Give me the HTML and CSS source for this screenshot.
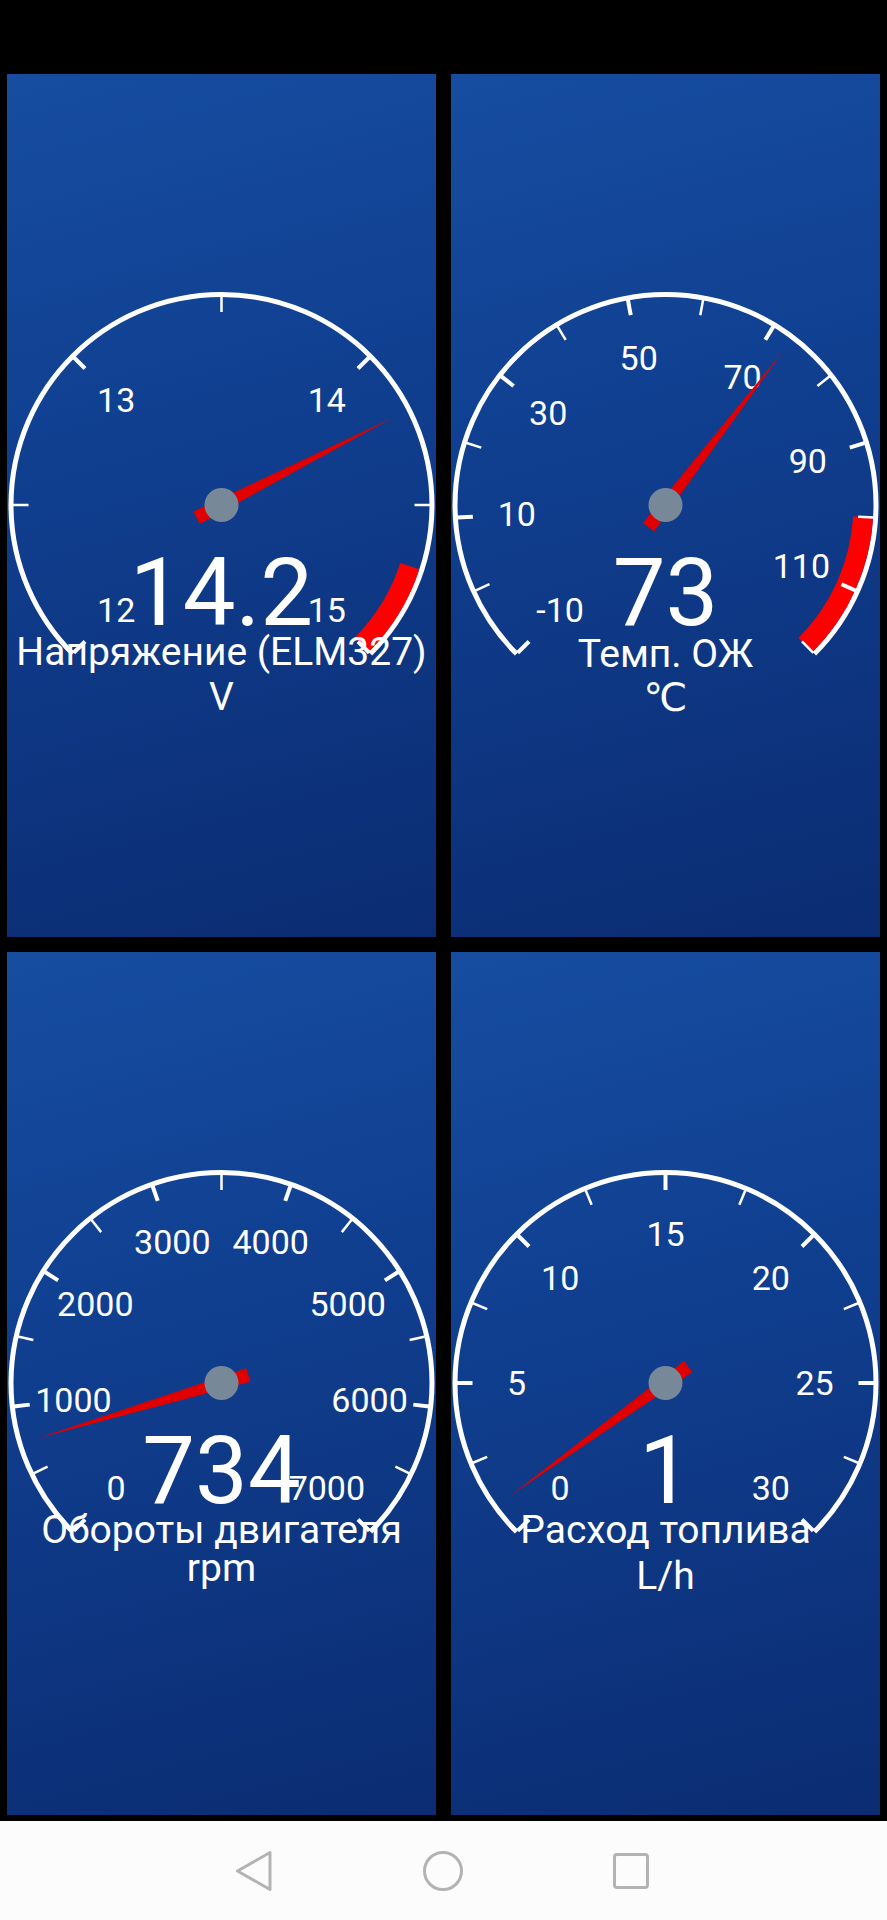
FILE: index.html
```html
<!DOCTYPE html>
<html lang="ru">
<head>
<meta charset="utf-8">
<title>Gauges</title>
<link rel="stylesheet" href="styles.css">
</head>
<body>
<div class="screen">
  <div class="status-bar"></div>
  <main class="grid">
    <!-- Voltage -->
    <section class="panel">
      <svg class="gauge" viewBox="-214.5 -215 429 430" width="429" height="430">
        <circle class="rim" r="210.5" pathLength="360" transform="rotate(135)"/>
        <circle class="zone" r="198" pathLength="360" stroke-dasharray="27 333" transform="rotate(18)"/>
        <line class="tick major" x1="193" x2="209" transform="rotate(-225)"/>
        <line class="tick minor" x1="193" x2="209" transform="rotate(-180)"/>
        <line class="tick major" x1="193" x2="209" transform="rotate(-135)"/>
        <line class="tick minor" x1="193" x2="209" transform="rotate(-90)"/>
        <line class="tick major" x1="193" x2="209" transform="rotate(-45)"/>
        <line class="tick minor" x1="193" x2="209" transform="rotate(0)"/>
        <line class="tick major" x1="193" x2="209" transform="rotate(45)"/>
        <text class="scale" transform="rotate(-225) translate(149) rotate(225)">12</text>
        <text class="scale" transform="rotate(-135) translate(149) rotate(135)">13</text>
        <text class="scale" transform="rotate(-45) translate(149) rotate(45)">14</text>
        <text class="scale" transform="rotate(45) translate(149) rotate(-45)">15</text>
        <polygon class="needle" points="-28,-7 -28,7 192,0" transform="rotate(-27)"/>
        <circle class="pivot" r="17"/>
        <text class="value" y="120">14.2</text>
        <text class="title" y="160">Напряжение (ELM327)</text>
        <text class="unit" y="205">V</text>
      </svg>
    </section>

    <!-- Coolant temperature -->
    <section class="panel">
      <svg class="gauge" viewBox="-214.5 -215 429 430" width="429" height="430">
        <circle class="rim" r="210.5" pathLength="360" transform="rotate(135)"/>
        <circle class="zone" r="198" pathLength="360" stroke-dasharray="41.54 318.46" transform="rotate(3.46)"/>
        <line class="tick major" x1="193" x2="209" transform="rotate(-225)"/>
        <line class="tick minor" x1="193" x2="209" transform="rotate(-204.23)"/>
        <line class="tick major" x1="193" x2="209" transform="rotate(-183.46)"/>
        <line class="tick minor" x1="193" x2="209" transform="rotate(-162.69)"/>
        <line class="tick major" x1="193" x2="209" transform="rotate(-141.92)"/>
        <line class="tick minor" x1="193" x2="209" transform="rotate(-121.15)"/>
        <line class="tick major" x1="193" x2="209" transform="rotate(-100.38)"/>
        <line class="tick minor" x1="193" x2="209" transform="rotate(-79.62)"/>
        <line class="tick major" x1="193" x2="209" transform="rotate(-58.85)"/>
        <line class="tick minor" x1="193" x2="209" transform="rotate(-38.08)"/>
        <line class="tick major" x1="193" x2="209" transform="rotate(-17.31)"/>
        <line class="tick minor" x1="193" x2="209" transform="rotate(3.46)"/>
        <line class="tick major" x1="193" x2="209" transform="rotate(24.23)"/>
        <line class="tick minor" x1="193" x2="209" transform="rotate(45)"/>
        <text class="scale" transform="rotate(-225) translate(149) rotate(225)">-10</text>
        <text class="scale" transform="rotate(-183.46) translate(149) rotate(183.46)">10</text>
        <text class="scale" transform="rotate(-141.92) translate(149) rotate(141.92)">30</text>
        <text class="scale" transform="rotate(-100.38) translate(149) rotate(100.38)">50</text>
        <text class="scale" transform="rotate(-58.85) translate(149) rotate(58.85)">70</text>
        <text class="scale" transform="rotate(-17.31) translate(149) rotate(17.31)">90</text>
        <text class="scale" transform="rotate(24.23) translate(149) rotate(-24.23)">110</text>
        <polygon class="needle" points="-28,-7 -28,7 192,0" transform="rotate(-52.62)"/>
        <circle class="pivot" r="17"/>
        <text class="value" y="120">73</text>
        <text class="title" y="162">Темп. ОЖ</text>
        <text class="unit" y="206">℃</text>
      </svg>
    </section>

    <!-- RPM -->
    <section class="panel">
      <svg class="gauge" viewBox="-214.5 -215 429 430" width="429" height="430">
        <circle class="rim" r="210.5" pathLength="360" transform="rotate(135)"/>
        <line class="tick major" x1="193" x2="209" transform="rotate(-225)"/>
        <line class="tick minor" x1="193" x2="209" transform="rotate(-205.71)"/>
        <line class="tick major" x1="193" x2="209" transform="rotate(-186.43)"/>
        <line class="tick minor" x1="193" x2="209" transform="rotate(-167.14)"/>
        <line class="tick major" x1="193" x2="209" transform="rotate(-147.86)"/>
        <line class="tick minor" x1="193" x2="209" transform="rotate(-128.57)"/>
        <line class="tick major" x1="193" x2="209" transform="rotate(-109.29)"/>
        <line class="tick minor" x1="193" x2="209" transform="rotate(-90)"/>
        <line class="tick major" x1="193" x2="209" transform="rotate(-70.71)"/>
        <line class="tick minor" x1="193" x2="209" transform="rotate(-51.43)"/>
        <line class="tick major" x1="193" x2="209" transform="rotate(-32.14)"/>
        <line class="tick minor" x1="193" x2="209" transform="rotate(-12.86)"/>
        <line class="tick major" x1="193" x2="209" transform="rotate(6.43)"/>
        <line class="tick minor" x1="193" x2="209" transform="rotate(25.71)"/>
        <line class="tick major" x1="193" x2="209" transform="rotate(45)"/>
        <text class="scale" transform="rotate(-225) translate(149) rotate(225)">0</text>
        <text class="scale" transform="rotate(-186.43) translate(149) rotate(186.43)">1000</text>
        <text class="scale" transform="rotate(-147.86) translate(149) rotate(147.86)">2000</text>
        <text class="scale" transform="rotate(-109.29) translate(149) rotate(109.29)">3000</text>
        <text class="scale" transform="rotate(-70.71) translate(149) rotate(70.71)">4000</text>
        <text class="scale" transform="rotate(-32.14) translate(149) rotate(32.14)">5000</text>
        <text class="scale" transform="rotate(6.43) translate(149) rotate(-6.43)">6000</text>
        <text class="scale" transform="rotate(45) translate(149) rotate(-45)">7000</text>
        <polygon class="needle" points="-28,-7 -28,7 192,0" transform="rotate(-196.69)"/>
        <circle class="pivot" r="17"/>
        <text class="value" y="120">734</text>
        <text class="title" y="160">Обороты двигателя</text>
        <text class="unit" y="198">rpm</text>
      </svg>
    </section>

    <!-- Fuel consumption -->
    <section class="panel">
      <svg class="gauge" viewBox="-214.5 -215 429 430" width="429" height="430">
        <circle class="rim" r="210.5" pathLength="360" transform="rotate(135)"/>
        <line class="tick major" x1="193" x2="209" transform="rotate(-225)"/>
        <line class="tick minor" x1="193" x2="209" transform="rotate(-202.5)"/>
        <line class="tick major" x1="193" x2="209" transform="rotate(-180)"/>
        <line class="tick minor" x1="193" x2="209" transform="rotate(-157.5)"/>
        <line class="tick major" x1="193" x2="209" transform="rotate(-135)"/>
        <line class="tick minor" x1="193" x2="209" transform="rotate(-112.5)"/>
        <line class="tick major" x1="193" x2="209" transform="rotate(-90)"/>
        <line class="tick minor" x1="193" x2="209" transform="rotate(-67.5)"/>
        <line class="tick major" x1="193" x2="209" transform="rotate(-45)"/>
        <line class="tick minor" x1="193" x2="209" transform="rotate(-22.5)"/>
        <line class="tick major" x1="193" x2="209" transform="rotate(0)"/>
        <line class="tick minor" x1="193" x2="209" transform="rotate(22.5)"/>
        <line class="tick major" x1="193" x2="209" transform="rotate(45)"/>
        <text class="scale" transform="rotate(-225) translate(149) rotate(225)">0</text>
        <text class="scale" transform="rotate(-180) translate(149) rotate(180)">5</text>
        <text class="scale" transform="rotate(-135) translate(149) rotate(135)">10</text>
        <text class="scale" transform="rotate(-90) translate(149) rotate(90)">15</text>
        <text class="scale" transform="rotate(-45) translate(149) rotate(45)">20</text>
        <text class="scale" transform="rotate(0) translate(149) rotate(0)">25</text>
        <text class="scale" transform="rotate(45) translate(149) rotate(-45)">30</text>
        <polygon class="needle" points="-28,-7 -28,7 192,0" transform="rotate(-216)"/>
        <circle class="pivot" r="17"/>
        <text class="value" y="120">1</text>
        <text class="title" y="160">Расход топлива</text>
        <text class="unit" y="206">L/h</text>
      </svg>
    </section>
  </main>
  <div class="gap-bar"></div>
  <nav class="nav-bar">
    <svg class="nav-icon" viewBox="0 0 40 40" width="40" height="40">
      <path d="M36 1.5 L36 38.5 L3.5 20 Z"/>
    </svg>
    <svg class="nav-icon" viewBox="0 0 40 40" width="40" height="40">
      <circle cx="20" cy="20" r="18.5"/>
    </svg>
    <svg class="nav-icon" viewBox="0 0 40 40" width="40" height="40">
      <rect x="3.5" y="3.5" width="33" height="33" rx="2.5"/>
    </svg>
  </nav>
</div>
</body>
</html>
```

FILE: styles.css
```css
html, body {
  margin: 0;
  padding: 0;
  background: #000;
}

.screen {
  width: 887px;
  height: 1920px;
  display: flex;
  flex-direction: column;
  background: #000;
  font-family: Roboto, "Noto Sans", "DejaVu Sans", sans-serif;
}

.status-bar {
  height: 74px;
  flex: none;
}

.grid {
  display: grid;
  grid-template-columns: 429px 429px;
  grid-template-rows: 863px 863px;
  column-gap: 15px;
  row-gap: 15px;
  padding: 0 7px;
  flex: none;
}

.panel {
  background: linear-gradient(165deg, #164da1 0%, #103f90 40%, #0b2c72 100%);
  display: flex;
  flex-direction: column;
  align-items: center;
  padding-top: 216px;
  box-sizing: border-box;
  overflow: hidden;
}

.gauge {
  display: block;
  overflow: visible;
}

.rim {
  fill: none;
  stroke: #fff;
  stroke-width: 5;
  stroke-dasharray: 270 90;
}

.zone {
  fill: none;
  stroke: #ff0000;
  stroke-width: 20;
}

.tick {
  stroke: #fff;
}

.tick.major {
  stroke-width: 4;
}

.tick.minor {
  stroke-width: 2.5;
}

.scale {
  fill: #fff;
  font-family: Roboto, sans-serif;
  font-size: 34px;
  text-anchor: middle;
  dominant-baseline: central;
}

.needle {
  fill: #e00000;
}

.pivot {
  fill: #778899;
}

.value {
  fill: #fff;
  font-family: Roboto, sans-serif;
  font-size: 94px;
  text-anchor: middle;
}

.title,
.unit {
  fill: #fff;
  font-family: Roboto, "DejaVu Sans", sans-serif;
  font-size: 39px;
  text-anchor: middle;
}

.gap-bar {
  height: 6px;
  flex: none;
}

.nav-bar {
  flex: 1;
  background: #fcfcfc;
  display: flex;
  justify-content: center;
  align-items: center;
  gap: 148.5px;
  padding-right: 2px;
}

.nav-icon {
  display: block;
  fill: none;
  stroke: #b3b3b3;
  stroke-width: 3;
  stroke-linejoin: round;
  stroke-linecap: round;
}
```
